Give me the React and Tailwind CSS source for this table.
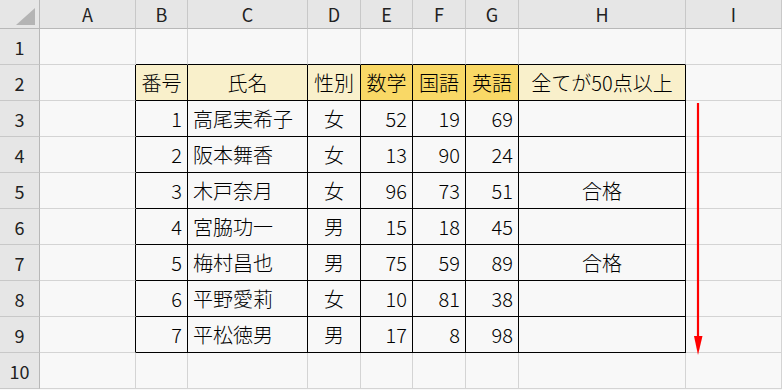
import React from "react";

const letters = ["A", "B", "C", "D", "E", "F", "G", "H", "I"];

const rows = [
  [1, "高尾実希子", "女", 52, 19, 69, ""],
  [2, "阪本舞香", "女", 13, 90, 24, ""],
  [3, "木戸奈月", "女", 96, 73, 51, "合格"],
  [4, "宮脇功一", "男", 15, 18, 45, ""],
  [5, "梅村昌也", "男", 75, 59, 89, "合格"],
  [6, "平野愛莉", "女", 10, 81, 38, ""],
  [7, "平松徳男", "男", 17, 8, 98, ""],
];

const grid = "border-r border-b border-[#d4d4d4]";
const tbl = "border-r border-b border-black";
const cellBase = "flex items-center px-[5px] text-[20px] font-light leading-none text-[#000] whitespace-nowrap";

function RowHead({ n }) {
  return (
    <div className="flex items-center justify-center bg-[#e6e6e6] border-r border-r-[#b8b8b8] border-b border-b-[#c8c8c8] text-[18px] leading-none text-[#222]">
      {n}
    </div>
  );
}

export default function App() {
  return (
    <div
      className="relative w-[782px] h-[390px] overflow-hidden bg-[#f8f8f8]"
      style={{ fontFamily: '"Noto Sans CJK JP", "Noto Sans", sans-serif' }}
    >
      <div className="grid grid-cols-[40px_96px_52px_120px_53px_52px_53px_53px_167px_96px] grid-rows-[29px_repeat(10,36px)]">
        {/* top-left corner */}
        <div className="relative bg-[#e6e6e6] border-r border-r-[#b8b8b8] border-b border-b-[#b8b8b8]">
          <svg width="40" height="29" className="absolute left-0 top-0">
            <polygon points="35,8 35,25 16,25" fill="#b4b4b4" />
          </svg>
        </div>
        {letters.map((l) => (
          <div
            key={l}
            className="flex items-center justify-center bg-[#e6e6e6] border-r border-r-[#c8c8c8] border-b border-b-[#b8b8b8] text-[18px] leading-none text-[#222]"
          >
            {l}
          </div>
        ))}

        {/* row 1 */}
        <RowHead n={1} />
        <div className={grid} />
        <div className="border-r border-r-[#d4d4d4] border-b border-b-black" />
        <div className="border-r border-r-[#d4d4d4] border-b border-b-black" />
        <div className="border-r border-r-[#d4d4d4] border-b border-b-black" />
        <div className="border-r border-r-[#d4d4d4] border-b border-b-black" />
        <div className="border-r border-r-[#d4d4d4] border-b border-b-black" />
        <div className="border-r border-r-[#d4d4d4] border-b border-b-black" />
        <div className="border-r border-r-[#d4d4d4] border-b border-b-black" />
        <div className={grid} />

        {/* row 2 headers */}
        <RowHead n={2} />
        <div className="border-r border-r-black border-b border-b-[#d4d4d4]" />
        <div className={`${tbl} ${cellBase} justify-center bg-[#f9f0cb]`}>番号</div>
        <div className={`${tbl} ${cellBase} justify-center bg-[#f9f0cb]`}>氏名</div>
        <div className={`${tbl} ${cellBase} justify-center bg-[#f9f0cb]`}>性別</div>
        <div className={`${tbl} ${cellBase} justify-center bg-[#f9d866]`}>数学</div>
        <div className={`${tbl} ${cellBase} justify-center bg-[#f9d866]`}>国語</div>
        <div className={`${tbl} ${cellBase} justify-center bg-[#f9d866]`}>英語</div>
        <div className={`${tbl} ${cellBase} justify-center bg-[#f9f0cb]`}>全てが50点以上</div>
        <div className={grid} />

        {rows.map((r, i) => (
          <React.Fragment key={i}>
            <RowHead n={i + 3} />
            <div className="border-r border-r-black border-b border-b-[#d4d4d4]" />
            <div className={`${tbl} ${cellBase} justify-end`}>{r[0]}</div>
            <div className={`${tbl} ${cellBase} justify-start`}>{r[1]}</div>
            <div className={`${tbl} ${cellBase} justify-center`}>{r[2]}</div>
            <div className={`${tbl} ${cellBase} justify-end`}>{r[3]}</div>
            <div className={`${tbl} ${cellBase} justify-end`}>{r[4]}</div>
            <div className={`${tbl} ${cellBase} justify-end`}>{r[5]}</div>
            <div className={`${tbl} ${cellBase} justify-center`}>{r[6]}</div>
            <div className={grid} />
          </React.Fragment>
        ))}

        {/* row 10 */}
        <RowHead n={10} />
        {letters.map((l) => (
          <div key={l} className={grid} />
        ))}
      </div>

      {/* red arrow overlay */}
      <svg width="782" height="390" className="absolute left-0 top-0 pointer-events-none">
        <line x1="698" y1="103" x2="698" y2="342" stroke="#ff0000" strokeWidth="2.2" />
        <polygon points="694,336 702.5,336 698,355" fill="#ff0000" />
      </svg>
    </div>
  );
}
